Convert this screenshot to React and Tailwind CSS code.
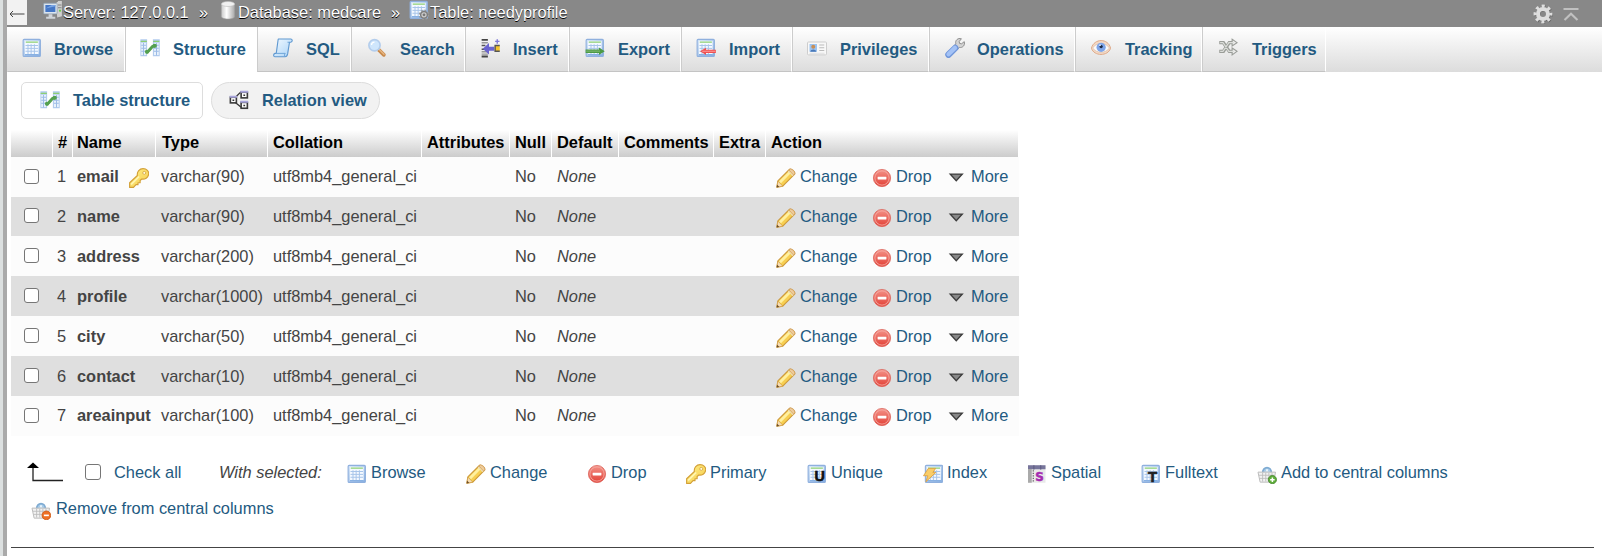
import React from "react";

const Svg = ({ children, className = "" }) => (
  <svg viewBox="0 0 16 16" className={"block h-5 w-5 shrink-0 " + className}>{children}</svg>
);

const Defs = () => (
  <svg className="absolute h-0 w-0" aria-hidden="true">
    <defs>
      <linearGradient id="sheet" x1="0" y1="0" x2="1" y2="1">
        <stop offset="0" stopColor="#d6e5f8" /><stop offset="1" stopColor="#86aee0" />
      </linearGradient>
      <linearGradient id="scroll" x1="0" y1="0" x2="1" y2="1">
        <stop offset="0" stopColor="#f2f9ff" /><stop offset="1" stopColor="#a9d3f7" />
      </linearGradient>
      <linearGradient id="gold" x1="0" y1="0" x2="1" y2="1">
        <stop offset="0" stopColor="#fff08a" /><stop offset="1" stopColor="#f5cb4a" />
      </linearGradient>
      <linearGradient id="red" x1="0" y1="0" x2="0" y2="1">
        <stop offset="0" stopColor="#f3948a" /><stop offset="1" stopColor="#e23f35" />
      </linearGradient>
      <linearGradient id="can" x1="0" y1="0" x2="1" y2="0">
        <stop offset="0" stopColor="#c9c9c9" /><stop offset=".4" stopColor="#ffffff" /><stop offset="1" stopColor="#a9a9a9" />
      </linearGradient>
    </defs>
  </svg>
);

const Sheet = () => (
  <>
    <rect x=".9" y="1.1" width="13.8" height="13.6" rx=".8" fill="url(#sheet)" stroke="#8fb0de" strokeWidth=".9" />
    <rect x="2.3" y="2.3" width="11" height="11" fill="#f4f9ff" />
    <path d="M3 3.3h9.7" stroke="#8ccf72" strokeWidth="1" />
    <path d="M2.8 6h10M2.8 8.3h10M2.8 10.6h10M4.8 5v8M7.3 5v8M9.9 5v8" stroke="#a8c5ea" strokeWidth=".8" />
    <path d="M2.4 13.3h11" stroke="#88b1e3" strokeWidth="1" />
  </>
);

const Basket = () => (
  <>
    <path d="M4.500 7C4.500 1.500 11.500 1.500 11.500 7" fill="#a9cdea" stroke="#7fabd2" strokeWidth="1.300" />
    <path d="M7 7l1-3 1 3" stroke="#e6f3fc" strokeWidth=".8" fill="none" />
    <path d="M.8 6.500h14l-1.500 8H2.500z" fill="#f2f2f2" stroke="#bdbdbd" strokeWidth=".8" />
    <path d="M1.500 9h12M2 11.500h11M4.500 7v7M7 7v7M9.500 7v7M12 7v7" stroke="#bcbcbc" strokeWidth=".7" />
  </>
);

const shapes = {
  browse: <Sheet />,
  structure: (
    <>
      <rect x=".3" y="1" width="5.400" height="13.600" fill="#b3ccee" />
      <rect x="1" y="3.800" width="3.800" height="9.800" fill="#e9f2fc" />
      <rect x="10.300" y="1" width="5.500" height="13.600" fill="#b3ccee" />
      <rect x="11.200" y="3.800" width="3.800" height="9.800" fill="#e9f2fc" />
      <path d="M.5 2.600h5M10.500 2.600h5" stroke="#8ccf72" strokeWidth="1" />
      <path d="M1 5.800h3.800M1 8.200h3.800M1 10.600h3.800M11.200 5.800h3.800M11.200 8.200h3.800M11.200 10.600h3.800M13.200 4v10M2.800 4v10" stroke="#9dbce6" strokeWidth=".8" />
      <path d="M5.500 11.200C8 10.500 8.500 6.500 11.800 6" stroke="#54a050" strokeWidth="2.500" fill="none" />
      <circle cx="5.600" cy="11" r="1.700" fill="#54a050" /><circle cx="11.800" cy="6.200" r="1.700" fill="#54a050" />
    </>
  ),
  sql: (
    <>
      <path d="M4.200.8h10c1.600 0 1.500 2.500 0 2.600h-1l-1.500 9.300c-.3 1.500-1 2.300-2 2.300H1.600C0 15 .3 12.500 1.600 12.300h1L4 2z" fill="url(#scroll)" stroke="#5f98d0" strokeWidth=".9" strokeLinejoin="round" />
      <path d="M2.600 12.300h7.200c-.8.600-.8 2.200-.2 2.700M13.200 3.400h-1.600" fill="none" stroke="#6fa5d8" strokeWidth=".8" />
    </>
  ),
  search: (
    <>
      <path d="M9.500 9.500l4 4" stroke="#c98a4c" strokeWidth="2.900" strokeLinecap="round" />
      <path d="M9.600 9l4 4" stroke="#e8b884" strokeWidth="1" strokeLinecap="round" />
      <circle cx="6" cy="5.800" r="4.500" fill="#cfe6fc" stroke="#b3cdec" strokeWidth="1.300" />
      <path d="M3.600 5.500c0-1.500 1-2.300 2.400-2.300" stroke="#fff" strokeWidth="1" fill="none" />
    </>
  ),
  insert: (
    <>
      <path d="M.5 1.500h5M.5 14.800h5" stroke="#444" strokeWidth="1.500" />
      <path d="M.5 3.800h5M.5 11h5M.5 12.900h5" stroke="#999" strokeWidth="1.100" />
      <path d="M.5 6h3M.5 9h3" stroke="#555" strokeWidth="1.200" />
      <path d="M1.400 8.500l5-4.600v3h4.200v3.200H6.400v3z" fill="#6a64cf" />
      <rect x="11" y="6" width="4" height="4.600" fill="#f3c32c" />
      <path d="M15 6h-3.700v4.600H15" fill="none" stroke="#555" strokeWidth="1.100" />
      <path d="M13 1v3.500M11.300 2.700h3.500" stroke="#7d78d8" strokeWidth="1.100" />
    </>
  ),
  export: (
    <>
      <Sheet />
      <path d="M.5 9.200h10.600V7.600l4.700 3-4.700 3v-1.700H.5z" fill="#4c9a45" />
      <path d="M1 10.500h11" stroke="#83bb75" strokeWidth=".8" />
    </>
  ),
  import: (
    <>
      <Sheet />
      <path d="M15.900 9.300H8V7.700L3.200 10.600 8 13.500v-1.600h7.900z" fill="#ee5252" />
      <path d="M5 10.600h10.500" stroke="#ff9b9b" strokeWidth=".8" />
    </>
  ),
  privileges: (
    <>
      <rect x=".4" y="3.200" width="15.200" height="10.300" rx=".8" fill="#f8f8f8" stroke="#cdcdcd" strokeWidth=".8" />
      <rect x="2" y="4.800" width="6" height="6.200" fill="#9cc4f2" />
      <circle cx="5" cy="7" r="1.600" fill="#c88e55" /><path d="M2.600 11c.4-2.500 4.400-2.500 4.800 0z" fill="#4a79b8" />
      <path d="M9.800 5.600h4M9.800 7.800h4M9.800 10h4" stroke="#bbb" strokeWidth=".8" />
      <path d="M2 12.200h12" stroke="#ddd" strokeWidth=".7" />
    </>
  ),
  operations: (
    <>
      <path d="M8 8l3-3" stroke="#a3a3a3" strokeWidth="3.600" />
      <path d="M15.400 2.900c.8 3-1.200 5-3.900 4.700L9.500 9.400 6.900 6.900 8.600 4.600C8 1.700 10.400-.2 13.100.6L11.300 2.900l.4 1.500 1.600.2z" fill="#d4d4d4" stroke="#8e8e8e" strokeWidth=".8" />
      <path d="M2.800 13.300l5.400-5.300" stroke="#7096da" strokeWidth="5.200" strokeLinecap="round" />
      <path d="M2.800 13l5.200-5.100" stroke="#a3c2f6" strokeWidth="3.400" strokeLinecap="round" />
    </>
  ),
  tracking: (
    <>
      <path d="M.3 8.200C2.500 0 13.800 0 15.700 8.200 13.500 14.800 2.500 14.800.3 8.200z" fill="#f3d9c6" stroke="#dba27f" strokeWidth=".7" />
      <path d="M1.400 8C4 3.200 12 3.200 14.700 8 12 12.500 4 12.500 1.400 8z" fill="#fafafa" stroke="#d9b59d" strokeWidth=".5" />
      <circle cx="8.100" cy="7.400" r="3.700" fill="#7fa5e8" /><circle cx="8.100" cy="6.800" r="1.300" fill="#1e2a44" />
      <circle cx="7.200" cy="5.700" r=".7" fill="#dcebff" />
    </>
  ),
  triggers: (
    <>
      <path d="M1 3.700h3.300l4.700 7h3.500M1 10.700h3.300l4.700-7h3.500" fill="none" stroke="#9a9d98" strokeWidth="2.700" />
      <path d="M11.300 1l3.900 2.700-3.900 2.700zM11.300 8l3.900 2.700-3.900 2.800z" fill="#eee" stroke="#9a9d98" strokeWidth=".9" />
      <path d="M1.700 3.700h2.300l4.700 7h4M1.700 10.700h2.300l4.700-7h4" fill="none" stroke="#dcdedA" strokeWidth=".9" />
    </>
  ),
  relation: (
    <>
      <path d="M5 6l4.500-4.500M5 10l5 4" stroke="#333" strokeWidth="1" fill="none" />
      <g fill="#fff" stroke="#3b3b3b" strokeWidth="1.300">
        <rect x="1.100" y="5.800" width="4.800" height="4.500" /><rect x="9.700" y="1.800" width="5" height="4.500" /><rect x="9.700" y="9.900" width="5" height="4.700" />
      </g>
      <path d="M.5 5.300h6M9 1.300h6.300M9 9.300h6.300" stroke="#a9a5dc" strokeWidth="1.600" />
      <path d="M2.800 8.200h1.400M11.500 4.200h1.400M11.500 12.400h1.400" stroke="#333" strokeWidth="1.300" />
    </>
  ),
  edit: (
    <>
      <path d="M.7 15.300l.8-5L10.900 1C12.100.1 15.900 3.200 14.900 4.900L5.400 14.500z" fill="#f7cf52" stroke="#cd9a3c" strokeWidth=".9" strokeLinejoin="round" />
      <path d="M3.200 11.400l8-8.100" stroke="#fff0a0" strokeWidth="2.200" />
      <path d="M10.300 1.600l.8-.7c1.200-.8 4.700 2.200 3.800 3.900l-.8.900z" fill="#eecb9c" stroke="#cd9a5c" strokeWidth=".5" />
      <path d="M9.700 2.300l3.900 3.900" stroke="#e9d9b8" strokeWidth=".9" />
      <path d="M.7 15.300l.8-4.800 4 4z" fill="#f6dcb5" stroke="#cd9a3c" strokeWidth=".5" />
      <path d="M.5 15.500l.4-2.100 1.700 1.600z" fill="#6b4c28" />
    </>
  ),
  drop: (
    <>
      <circle cx="8" cy="8" r="6.900" fill="url(#red)" stroke="#db635a" strokeWidth=".6" />
      <circle cx="8" cy="8" r="5.700" fill="none" stroke="#f5aaa2" strokeWidth=".7" />
      <rect x="4.500" y="6.900" width="7" height="2.200" rx=".3" fill="#fff" />
    </>
  ),
  key: (
    <>
      <path d="M11.200.5c3 0 4.900 2 4.500 4.600-.4 2.700-3 4.200-5.500 3.700L8.900 10v1.800H7.200v1.500H5.600l-2 2.200H.5v-3.700L6.700 6C6.200 2.900 8.500.5 11.200.5z" fill="url(#gold)" stroke="#d3a037" strokeWidth=".9" strokeLinejoin="round" />
      <circle cx="12.200" cy="3.900" r="1.200" fill="#fffbe0" stroke="#d3a037" strokeWidth=".6" />
      <path d="M1.700 13.200l6.400-6.400" stroke="#fff7b5" strokeWidth="1.400" />
    </>
  ),
  more: <path d="M3.300 5.600h9.800L8.200 11z" fill="#888" stroke="#3c3c3c" strokeWidth="1" />,
  unique: (
    <>
      <Sheet />
      <text x="6" y="13.600" fontFamily="Liberation Sans, sans-serif" fontWeight="700" fontSize="11.500" fill="#111" stroke="#111" strokeWidth=".5">U</text>
    </>
  ),
  fulltext: (
    <>
      <Sheet />
      <text x="5.600" y="14" fontFamily="Liberation Sans, sans-serif" fontWeight="700" fontSize="12" fill="#222" stroke="#222" strokeWidth=".5">T</text>
    </>
  ),
  spatial: (
    <>
      <rect x=".8" y="1" width="14" height="14" fill="#e9e9e9" />
      <path d="M.8 2.600h14" stroke="#77759b" strokeWidth="3.200" />
      <path d="M2.300 4v11" stroke="#aaa" strokeWidth="3" /><path d="M5.500 1v3.500M11 1v3.500" stroke="#5c5a80" strokeWidth=".8" />
      <path d="M5 5v10" stroke="#444" strokeWidth=".8" strokeDasharray="1 1" />
      <text x="6.600" y="13.400" fontFamily="DejaVu Sans, sans-serif" fontWeight="700" fontSize="9.500" fill="#a52bb0" stroke="#a52bb0" strokeWidth=".4">S</text>
    </>
  ),
  index: (
    <>
      <g transform="translate(1 0)"><Sheet /></g>
      <path d="M4.300 3.500h5.800L7.900 6.700h2.400l-8 7.500 1.600-4.800H.4z" fill="#f9cd68" stroke="#dea03e" strokeWidth=".7" />
    </>
  ),
  basketAdd: (
    <>
      <Basket />
      <circle cx="12.300" cy="12.500" r="3.300" fill="#5fae3b" stroke="#3f8025" strokeWidth=".6" />
      <path d="M12.300 10.700v3.600M10.500 12.500h3.600" stroke="#fff" strokeWidth="1.200" />
    </>
  ),
  basketRemove: (
    <>
      <Basket />
      <circle cx="12.300" cy="12.300" r="3.500" fill="#ee7024" stroke="#c9540f" strokeWidth=".6" />
      <path d="M10.300 12.300h4" stroke="#fff" strokeWidth="1.300" />
    </>
  ),
  server: (
    <>
      <path d="M10 2.300L12.500.3h3v13l-4.500 1.200z" fill="#cfcfcf" stroke="#777" strokeWidth=".6" />
      <path d="M12 4h2.800M12 6.200h2.800" stroke="#777" strokeWidth=".7" /><circle cx="13.600" cy="8.500" r=".9" fill="#69d04b" />
      <rect x=".5" y="2.600" width="10.800" height="8.500" rx=".6" fill="#dce5ee" stroke="#8b9db0" strokeWidth=".6" />
      <rect x="1.900" y="4" width="8" height="5.600" fill="#4577c6" /><path d="M2 6.800l5-2.800h3v1z" fill="#7ba6e6" />
      <path d="M4.500 11.300h3v2h2.300v1.600H2.500v-1.600h2z" fill="#cfd4d9" />
    </>
  ),
  database: (
    <>
      <path d="M2.700 3.200v10c0 2.600 10.600 2.600 10.600 0v-10z" fill="url(#can)" stroke="#a5a5a5" strokeWidth=".4" />
      <ellipse cx="8" cy="3.200" rx="5.300" ry="2" fill="#f1f1f1" stroke="#bdbdbd" strokeWidth=".5" />
    </>
  ),
  table: (
    <>
      <Sheet />
      <circle cx="12" cy="11.800" r="2.700" fill="#ccc" stroke="#7d7d7d" strokeWidth="1.200" />
      <circle cx="12" cy="11.800" r="3.700" fill="none" stroke="#9b9b9b" strokeWidth="1" strokeDasharray="1.400 1.500" />
      <circle cx="12" cy="11.800" r="1.100" fill="#777" />
    </>
  ),
  gear: (
    <>
      <g fill="none" stroke="#666" transform="translate(.5 .6)">
        <circle cx="8" cy="8" r="4.100" strokeWidth="3" /><circle cx="8" cy="8" r="6.300" strokeWidth="2.500" strokeDasharray="2.400 2.548" strokeDashoffset="1.200" />
      </g>
      <g fill="none" stroke="#dedede">
        <circle cx="8" cy="8" r="4" strokeWidth="3.200" /><circle cx="8" cy="8" r="6.300" strokeWidth="2.500" strokeDasharray="2.400 2.548" strokeDashoffset="1.200" />
      </g>
    </>
  ),
  collapse: <path d="M2 3.200h12M2.800 12L8 7l5.200 5" fill="none" stroke="#c0c0c0" strokeWidth="1.700" />,
};

const Icon = ({ name, className }) => <Svg className={className}>{shapes[name]}</Svg>;

const tabs = [
  ["browse", "Browse", "w-[118px] pl-[15px]", "ml-[12px]"],
  ["structure", "Structure", "w-[132px] pl-[15px]", "ml-[13px]"],
  ["sql", "SQL", "w-[94px] pl-[16px]", "ml-[13px]"],
  ["search", "Search", "w-[114px] pl-[16px]", "ml-[13px]"],
  ["insert", "Insert", "w-[104px] pl-[16px]", "ml-[12px]"],
  ["export", "Export", "w-[112px] pl-[16px]", "ml-[13px]"],
  ["import", "Import", "w-[111px] pl-[15px]", "ml-[13px]"],
  ["privileges", "Privileges", "w-[137px] pl-[15px]", "ml-[13px]"],
  ["operations", "Operations", "w-[146px] pl-[16px]", "ml-[12px]"],
  ["tracking", "Tracking", "w-[127px] pl-[16px]", "ml-[14px]"],
  ["triggers", "Triggers", "w-[124px] pl-[16px]", "ml-[14px]"],
];

const columns = [
  ["", "w-[42px]", ""],
  ["#", "w-[20px]", "pl-[5px]"],
  ["Name", "w-[83px]", "pl-[4px]"],
  ["Type", "w-[112px]", "pl-[6px]"],
  ["Collation", "w-[154px]", "pl-[5px]"],
  ["Attributes", "w-[88px]", "pl-[5px]"],
  ["Null", "w-[42px]", "pl-[5px]"],
  ["Default", "w-[67px]", "pl-[5px]"],
  ["Comments", "w-[95px]", "pl-[5px]"],
  ["Extra", "w-[52px]", "pl-[5px]"],
  ["Action", "w-[253px]", "pl-[5px]"],
];

const rows = [
  ["email", "varchar(90)", "h-10", "pb-[2px]"],
  ["name", "varchar(90)", "h-[39px]", "pb-px"],
  ["address", "varchar(200)", "h-10", "pb-0"],
  ["profile", "varchar(1000)", "h-10", "pb-0"],
  ["city", "varchar(50)", "h-10", "pb-0"],
  ["contact", "varchar(10)", "h-10", "pb-0"],
  ["areainput", "varchar(100)", "h-10", "pb-[2px]"],
];

const bulk = [
  ["browse", "Browse", "w-[119px]"],
  ["edit", "Change", "w-[121px]"],
  ["drop", "Drop", "w-[99px]"],
  ["key", "Primary", "w-[121px]"],
  ["unique", "Unique", "w-[116px]"],
  ["index", "Index", "w-[104px]"],
  ["spatial", "Spatial", "w-[114px]"],
  ["fulltext", "Fulltext", "w-[116px]"],
  ["basketAdd", "Add to central columns", "w-[200px]"],
];

const Check = ({ className = "" }) => (
  <input type="checkbox" className={"block shrink-0 appearance-none rounded-[3px] border border-[#767676] bg-white " + className} />
);

function Breadcrumb() {
  return (
    <header className="flex h-[27px] bg-[#888] text-white">
      <div className="flex h-[25px] w-5 items-center justify-center bg-[#f2f2f2] text-[#444]">
        <svg viewBox="0 0 16 8" className="mt-[2px] h-2 w-4"><path d="M15.500 4H1M4 1L1 4l3 3" fill="none" stroke="#444" /></svg>
      </div>
      <nav className="flex h-6 grow items-center pl-4 [text-shadow:0_1px_0_#000]">
        <Icon name="server" className="-mt-[4px]" />
        <span className="w-[136px]">Server: 127.0.0.1</span>
        <span className="w-[19px]">»</span>
        <Icon name="database" className="-mt-[5px]" />
        <span className="w-[153px]">Database: medcare</span>
        <span className="w-[18px]">»</span>
        <Icon name="table" className="-mt-[4px]" />
        <span className="ml-px">Table: needyprofile</span>
      </nav>
      <div className="flex items-center gap-[8px] pr-[21px]">
        <Icon name="gear" />
        <Icon name="collapse" className="mt-[3px]" />
      </div>
    </header>
  );
}

export default function App() {
  return (
    <div className="flex h-[556px] w-[1603px] overflow-hidden bg-white font-['Liberation_Sans',Arial,sans-serif] text-[16.4px] leading-[20px] whitespace-nowrap text-[#444]">
      <Defs />
      <div className="w-[7px] shrink-0 border-r-4 border-[#aaa] bg-[#dce0e0]" />
      <div className="w-[1595px] shrink-0">
        <Breadcrumb />
        <nav className="flex h-[45px] bg-linear-to-b from-white to-[#dcdcdc] font-bold text-[#235a81]">
          {tabs.map(([icon, label, size, gap], i) => (
            <a
              key={label}
              className={
                "flex shrink-0 items-center pb-px " + size + " " +
                (i === 1
                  ? "border-l border-[#ccc] bg-white"
                  : "border-r border-b border-l border-r-white border-b-[#c4c4c4] " + (i === 0 ? "border-l-transparent" : "border-l-[#ccc]"))
              }
            >
              <Icon name={icon} className="-mt-[2px] -ml-px" />
              <span className={gap}>{label}</span>
            </a>
          ))}
        </nav>

        <div className="mt-[10px] ml-[14px] flex gap-2 font-bold text-[#235a81]">
          <a className="flex h-[37px] w-[182px] items-center rounded-[5px] border border-[#ddd] pb-[2px] pl-[18px]">
            <Icon name="structure" className="mt-px" />
            <span className="ml-[13px]">Table structure</span>
          </a>
          <a className="flex h-[37px] w-[169px] items-center rounded-full border border-[#ddd] bg-[#f2f2f2] pb-[2px] pl-[17px]">
            <Icon name="relation" className="mt-px" />
            <span className="ml-[13px]">Relation view</span>
          </a>
        </div>

        <table className="mt-[11px] ml-1 w-[1008px] table-fixed border-collapse">
          <thead>
            <tr className="h-[27px] bg-linear-to-b from-white to-[#ccc] text-left text-black">
              {columns.map(([label, width, pad], i) => (
                <th key={i} className={"p-0 " + width}>
                  <div className={"h-[27px] border-r border-white leading-[25px] " + pad}>{label}</div>
                </th>
              ))}
            </tr>
          </thead>
          <tbody>
            {rows.map(([name, type, height, lift], i) => (
              <tr key={name} className={height + (i % 2 ? " bg-[#dfdfdf]" : " bg-[#fcfcfc]")}>
                <td className="pb-[2px] pl-[13px]"><Check className="h-[15px] w-[15px]" /></td>
                <td className={"pl-[4px] " + lift}>{i + 1}</td>
                <td className={"pl-[4px] " + lift}>
                  <div className="flex h-5 items-center">
                    <b>{name}</b>
                    {i === 0 && <Icon name="key" className="mt-[3px] ml-[10px]" />}
                  </div>
                </td>
                <td className={"pl-[5px] " + lift}>{type}</td>
                <td className={"pl-[5px] " + lift}>utf8mb4_general_ci</td>
                <td />
                <td className={"pl-[5px] " + lift}>No</td>
                <td className={"pl-[5px] italic " + lift}>None</td>
                <td />
                <td />
                <td className={lift}>
                  <div className="flex h-5 items-center pl-[10px] text-[#235a81]">
                    <Icon name="edit" className="mt-[3px]" />
                    <span className="ml-[4px] w-[72px]">Change</span>
                    <Icon name="drop" className="mt-[3px]" />
                    <span className="ml-[4px] w-[50px]">Drop</span>
                    <Icon name="more" className="mt-[2px]" />
                    <span className="ml-[5px]">More</span>
                  </div>
                </td>
              </tr>
            ))}
          </tbody>
        </table>

        <div className="mt-[26px] flex h-5 items-center text-[#235a81]">
          <svg viewBox="0 0 38 20" className="ml-5 h-5 w-[38px] shrink-0">
            <path d="M6 3v15.500h30" fill="none" stroke="#222" strokeWidth="1.300" /><path d="M6 .5l6 5.500H0z" fill="#000" />
          </svg>
          <Check className="ml-5 h-4 w-4" />
          <span className="ml-[13px] w-[105px]">Check all</span>
          <i className="w-[127px] text-[#444]">With selected:</i>
          {bulk.map(([icon, label, width]) => (
            <a key={label} className={"flex shrink-0 items-center gap-[4px] pl-px " + width}>
              <Icon name={icon} className="mt-[3px]" />
              <span>{label}</span>
            </a>
          ))}
        </div>
        <div className="mt-[16px] ml-6 flex h-5 items-center gap-[5px] text-[#235a81]">
          <Icon name="basketRemove" className="mt-1" />
          <span>Remove from central columns</span>
        </div>
        <hr className="mt-[29px] ml-1 w-[1583px] border-[#444]" />
      </div>
    </div>
  );
}
